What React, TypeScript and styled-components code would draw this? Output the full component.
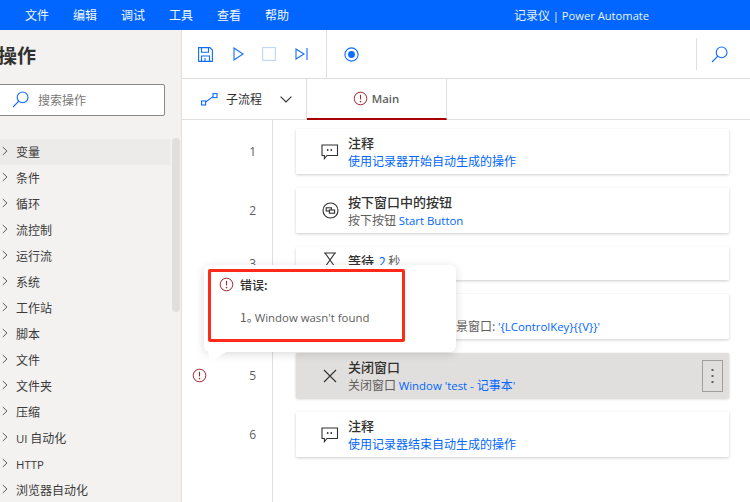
import React from 'react';
import styled, { createGlobalStyle } from 'styled-components';

const Global = createGlobalStyle`
  html, body { margin: 0; padding: 0; width: 750px; height: 502px; overflow: hidden; background: #fff; }
  body { font-family: "Noto Sans CJK SC", "Open Sans", sans-serif; font-size: 12px; color: #323130; }
  * { box-sizing: border-box; }
`;

const Latin = styled.span`
  font-family: "Open Sans", sans-serif; font-size: 11.4px;
`;
const TitleLatin = styled.span`
  font-family: "Open Sans", sans-serif; font-size: 11.2px;
`;
const Page = styled.div`
  width: 750px; height: 502px; display: flex; flex-direction: column; overflow: hidden; position: relative;
`;
const TitleBar = styled.header`
  height: 30px; flex: none; background: #0066ff; color: #fff; display: flex; align-items: center; padding: 0 0 1px 25px; position: relative;
`;
const MenuItem = styled.span`
  width: 48px; font-size: 12px; line-height: 28px; color: #f4f8ff;
`;
const AppTitle = styled.span`
  margin-left: 201px; font-size: 12px; color: #eaf2ff; white-space: nowrap;
`;
const Body = styled.div`
  flex: 1; display: flex; min-height: 0;
`;
const Sidebar = styled.aside`
  width: 182px; flex: none; background: #f3f2f1; border-right: 1px solid #e1dfdd; display: flex; flex-direction: column; position: relative; overflow: hidden;
`;
const SideHeading = styled.h1`
  margin: 10px 0 0 -2px; font-size: 19px; line-height: 30px; height: 30px; font-weight: 700; color: #323130;
`;
const SearchBox = styled.div`
  margin: 14px 0 0 -8px; width: 173px; height: 32px; flex: none; background: #fff; border: 1px solid #8a8886; border-radius: 2px;
  display: flex; align-items: center; padding: 0 0 2px 19px; gap: 9px; color: #797775;
`;
const ActionList = styled.ul`
  list-style: none; margin: 23px 0 0; padding: 0; width: 170px;
`;
const ActionRow = styled.li<{ $active?: boolean }>`
  height: 26px; display: flex; align-items: center; gap: 8px; padding: 0 0 2px 2px; color: #3b3a39;
  background: ${p => (p.$active ? '#edebe9' : 'transparent')}; font-size: 12px; white-space: nowrap;
`;
const Scrollbar = styled.div`
  position: absolute; left: 172px; top: 108px; width: 8px; height: 174px; background: #e1dfdd; border-radius: 4px;
`;
const Main = styled.main`
  flex: 1; min-width: 0; display: flex; flex-direction: column;
`;
const Toolbar = styled.div`
  height: 49px; flex: none; display: flex; align-items: center; border-bottom: 1px solid #e1dfdd;
`;
const ToolGroup = styled.div`
  width: 145px; height: 48px; flex: none; border-right: 1px solid #e1dfdd; display: flex; align-items: center; padding-left: 16px; gap: 0;
`;
const ToolIcon = styled.span<{ $w: number }>`
  width: ${p => p.$w}px; display: flex; align-items: center; flex: none;
`;
const RecordWrap = styled.div`
  flex: 1; padding-left: 17px; display: flex; align-items: center;
`;
const SearchTool = styled.div`
  width: 54px; height: 32px; flex: none; border-left: 1px solid #e1dfdd; display: flex; align-items: center; padding-left: 14px;
`;
const TabBar = styled.div`
  height: 41px; flex: none; display: flex; border-bottom: 1px solid #e1dfdd;
`;
const SubflowTab = styled.div`
  width: 125px; flex: none; border-right: 1px solid #e1dfdd; display: flex; align-items: center; padding-left: 19px; font-size: 12px; color: #323130;
`;
const SubflowLabel = styled.span`
  margin: 0 0 2px 8px; width: 54px; white-space: nowrap;
`;
const MainTab = styled.div`
  width: 140px; flex: none; border-right: 1px solid #e1dfdd; border-bottom: 2px solid #a80000; margin-bottom: -1px;
  display: flex; align-items: center; justify-content: center; gap: 4px; padding-right: 1px; font-family: "Open Sans", sans-serif; font-size: 11.4px; font-weight: 600; color: #605e5c;
`;
const Canvas = styled.div`
  flex: 1; display: flex; flex-direction: column; min-height: 0; overflow: hidden;
`;
const Row = styled.div<{ $fill?: boolean; $h?: number }>`
  display: flex; flex: ${p => (p.$fill ? 1 : 'none')}; ${p => (p.$h ? `height: ${p.$h}px;` : '')}
`;
const Gutter = styled.div`
  width: 91px; flex: none; border-right: 1px solid #e1dfdd; display: flex; align-items: center; justify-content: flex-end; padding-right: 16px; position: relative;
  font-family: "Open Sans", sans-serif; font-size: 12px; color: #605e5c;
`;
const GutterError = styled.span`
  position: absolute; left: 10px; top: 50%; margin-top: -8px; display: flex;
`;
const CardCell = styled.div`
  flex: 1; padding: 7px 21px 7px 23px;
`;
const Card = styled.div<{ $selected?: boolean; $short?: boolean }>`
  height: ${p => (p.$short ? 33 : 45)}px; background: ${p => (p.$selected ? '#e1dfdd' : '#fff')};
  box-shadow: 0 1px 3px rgba(0,0,0,.2); display: flex; align-items: ${p => (p.$short ? 'flex-start' : 'center')};
  padding: ${p => (p.$short ? '5px 0 0 25px' : '0 0 0 25px')}; position: relative; border-radius: 1px;
`;
const CardIcon = styled.span`
  width: 18px; flex: none; margin-right: 9px; display: flex; justify-content: center;
`;
const CardText = styled.div`
  display: flex; flex-direction: column; white-space: nowrap; flex: 1;
`;
const CardTitle = styled.div`
  font-size: 13px; line-height: 17px; color: #323130; font-weight: 500;
`;
const CardSub = styled.div`
  font-size: 12px; line-height: 17px; color: #605e5c; margin-top: 1px;
`;
const TitleDetail = styled.span`
  margin-left: 2px; font-size: 12px; font-weight: 400; color: #605e5c;
`;
const Param = styled.span`
  color: #0066ff;
`;
const Kebab = styled.button`
  width: 21px; height: 32px; flex: none; margin-right: 6px; padding: 0; background: transparent; border: 1px solid #a19f9d;
  display: flex; align-items: center; justify-content: center;
`;
const Popover = styled.div`
  position: absolute; left: 204px; top: 265px; width: 252px; height: 87px; background: #fff; border-radius: 6px;
  box-shadow: 0 2px 10px rgba(0,0,0,.14); padding: 11px 15px; z-index: 3;
`;
const PopArrow = styled.div`
  position: absolute; left: 4px; top: 87px; width: 0; height: 0;
  border-style: solid; border-color: #fff transparent transparent transparent;
  border-width: 11px 16px 0 2px;
`;
const PopHead = styled.div`
  display: flex; align-items: center; gap: 6px; font-size: 12px; line-height: 17px; font-weight: 500; color: #323130;
`;
const PopBody = styled.div`
  margin: 15px 0 0 21px; font-size: 12px; line-height: 17px; color: #605e5c; white-space: nowrap;
`;
const ListStop = styled.span`
  margin-right: -4px;
`;
const Annotation = styled.div`
  position: absolute; left: 4px; top: 4px; width: 197px; height: 73px; border: 3px solid #ff2a1a; border-radius: 2px; pointer-events: none;
`;

const blue = '#0f6cff';

const ErrorIcon = () => (
  <svg width="15" height="15" viewBox="0 0 15 15" fill="none">
    <circle cx="7.5" cy="7.5" r="6.3" stroke="#a4262c" strokeWidth="1" />
    <path d="M7.5 3.8v4.6" stroke="#a4262c" strokeWidth="1.1" />
    <circle cx="7.5" cy="10.6" r=".8" fill="#a4262c" />
  </svg>
);
const Magnifier = ({ size = 17 }: { size?: number }) => (
  <svg width={size} height={size} viewBox="0 0 17 17" fill="none" stroke={blue} strokeWidth="1.1">
    <circle cx="10.6" cy="6.4" r="5.4" />
    <path d="M6.8 10.2 1 16" />
  </svg>
);
const Chevron = () => (
  <svg width="6" height="10" viewBox="0 0 6 10" fill="none" stroke="#605e5c" strokeWidth="1">
    <path d="M.8 1 5 5 .8 9" />
  </svg>
);
const CommentIcon = () => (
  <svg width="18" height="16" viewBox="0 0 18 16" fill="none" stroke="#323130" strokeWidth="1.1">
    <path d="M1 1h15.5v10.5H6L3.4 14.6v-3.1H1z" />
    <circle cx="6.7" cy="6" r=".9" fill="#323130" stroke="none" />
    <circle cx="10.3" cy="6" r=".9" fill="#323130" stroke="none" />
  </svg>
);
const PressIcon = () => (
  <svg width="17" height="17" viewBox="0 0 17 17" fill="none" stroke="#323130" strokeWidth="1.1">
    <circle cx="8.5" cy="8.5" r="7.5" />
    <rect x="4.2" y="5.8" width="5.2" height="3.2" />
    <rect x="7.4" y="8" width="5.2" height="3.2" fill="#fff" />
  </svg>
);
const Hourglass = () => (
  <svg width="14" height="16" viewBox="0 0 14 16" fill="none" stroke="#323130" strokeWidth="1.1">
    <path d="M1 1h12M1 15h12M2 1l10 14M12 1 2 15" />
  </svg>
);
const CloseIcon = () => (
  <svg width="14" height="14" viewBox="0 0 14 14" fill="none" stroke="#323130" strokeWidth="1.1">
    <path d="M1 1l12 12M13 1 1 13" />
  </svg>
);

const actions: React.ReactNode[] = ['变量', '条件', '循环', '流控制', '运行流', '系统', '工作站', '脚本', '文件', '文件夹', '压缩', <><Latin>UI</Latin> 自动化</>, <Latin>HTTP</Latin>, '浏览器自动化'];
const menus = ['文件', '编辑', '调试', '工具', '查看', '帮助'];

export default function App() {
  return (
    <Page>
      <Global />
      <TitleBar>
        {menus.map(m => <MenuItem key={m}>{m}</MenuItem>)}
        <AppTitle>记录仪 <TitleLatin>| Power Automate</TitleLatin></AppTitle>
      </TitleBar>
      <Body>
        <Sidebar>
          <SideHeading>操作</SideHeading>
          <SearchBox><Magnifier /><span>搜索操作</span></SearchBox>
          <ActionList>
            {actions.map((a, i) => (
              <ActionRow key={i} $active={i === 0}><Chevron /><span>{a}</span></ActionRow>
            ))}
          </ActionList>
          <Scrollbar />
        </Sidebar>
        <Main>
          <Toolbar>
            <ToolGroup>
              <ToolIcon $w={35}>
                <svg width="15" height="15" viewBox="0 0 15 15" fill="none" stroke={blue} strokeWidth="1.1">
                  <path d="M.6.6h11.3l2.5 2.5v11.3H.6z" />
                  <path d="M3.5.6v4.6h7V.6M3.5 14.4V9h8v5.4M7 11v3.4" />
                </svg>
              </ToolIcon>
              <ToolIcon $w={29}>
                <svg width="11" height="14" viewBox="0 0 11 14" fill="none" stroke={blue} strokeWidth="1.1"><path d="M1 1v12l9-6z" /></svg>
              </ToolIcon>
              <ToolIcon $w={33}>
                <svg width="14" height="14" viewBox="0 0 14 14" fill="none" stroke="#bcd6fb" strokeWidth="1.1"><rect x=".6" y=".6" width="12.8" height="12.8" /></svg>
              </ToolIcon>
              <ToolIcon $w={20}>
                <svg width="13" height="12" viewBox="0 0 13 12" fill="none" stroke={blue} strokeWidth="1.1"><path d="M1 1v10l8-5zM12 0v12" /></svg>
              </ToolIcon>
            </ToolGroup>
            <RecordWrap>
              <svg width="15" height="15" viewBox="0 0 15 15" fill="none">
                <circle cx="7.5" cy="7.5" r="6.6" stroke={blue} strokeWidth="1.1" />
                <circle cx="7.5" cy="7.5" r="3.4" fill={blue} />
              </svg>
            </RecordWrap>
            <SearchTool><Magnifier /></SearchTool>
          </Toolbar>
          <TabBar>
            <SubflowTab>
              <svg width="17" height="13" viewBox="0 0 17 13" fill="none" stroke={blue} strokeWidth="1.1">
                <rect x=".6" y="8" width="4" height="4" /><rect x="12" y=".6" width="4" height="4" />
                <path d="M4.6 9 12 3.6" />
              </svg>
              <SubflowLabel>子流程</SubflowLabel>
              <svg width="12" height="7" viewBox="0 0 12 7" fill="none" stroke="#323130" strokeWidth="1.1"><path d="M.6.6 6 6l5.4-5.4" /></svg>
            </SubflowTab>
            <MainTab><ErrorIcon /><span>Main</span></MainTab>
          </TabBar>
          <Canvas>
            <Row $h={2}><Gutter /></Row>
            <Row>
              <Gutter>1</Gutter>
              <CardCell><Card><CardIcon><CommentIcon /></CardIcon><CardText><CardTitle>注释</CardTitle><CardSub><Param>使用记录器开始自动生成的操作</Param></CardSub></CardText></Card></CardCell>
            </Row>
            <Row>
              <Gutter>2</Gutter>
              <CardCell><Card><CardIcon><PressIcon /></CardIcon><CardText><CardTitle>按下窗口中的按钮</CardTitle><CardSub>按下按钮 <Param><Latin>Start Button</Latin></Param></CardSub></CardText></Card></CardCell>
            </Row>
            <Row>
              <Gutter>3</Gutter>
              <CardCell><Card $short><CardIcon><Hourglass /></CardIcon><CardText><CardTitle>等待 <TitleDetail><Param>2</Param> 秒</TitleDetail></CardTitle></CardText></Card></CardCell>
            </Row>
            <Row>
              <Gutter>4</Gutter>
              <CardCell><Card><CardIcon /><CardText><CardTitle>发送按键</CardTitle><CardSub>将以下按键发送到前景窗口: <Param><Latin>'{'{'}LControlKey{'}'}{'{'}{'{'}V{'}'}{'}'}'</Latin></Param></CardSub></CardText></Card></CardCell>
            </Row>
            <Row>
              <Gutter><GutterError><ErrorIcon /></GutterError>5</Gutter>
              <CardCell><Card $selected><CardIcon><CloseIcon /></CardIcon><CardText><CardTitle>关闭窗口</CardTitle><CardSub>关闭窗口 <Param><Latin>Window 'test - </Latin>记事本<Latin>'</Latin></Param></CardSub></CardText>
                <Kebab aria-label="more">
                  <svg width="3" height="16" viewBox="0 0 3 16" fill="#605e5c"><rect x=".5" y="1" width="2" height="2" /><rect x=".5" y="7" width="2" height="2" /><rect x=".5" y="13" width="2" height="2" /></svg>
                </Kebab>
              </Card></CardCell>
            </Row>
            <Row>
              <Gutter>6</Gutter>
              <CardCell><Card><CardIcon><CommentIcon /></CardIcon><CardText><CardTitle>注释</CardTitle><CardSub><Param>使用记录器结束自动生成的操作</Param></CardSub></CardText></Card></CardCell>
            </Row>
            <Row $fill><Gutter /></Row>
          </Canvas>
        </Main>
      </Body>
      <Popover>
        <PopHead><ErrorIcon /><span>错误:</span></PopHead>
        <PopBody>1<ListStop>。</ListStop><Latin>Window wasn't found</Latin></PopBody>
        <Annotation />
        <PopArrow />
      </Popover>
    </Page>
  );
}
